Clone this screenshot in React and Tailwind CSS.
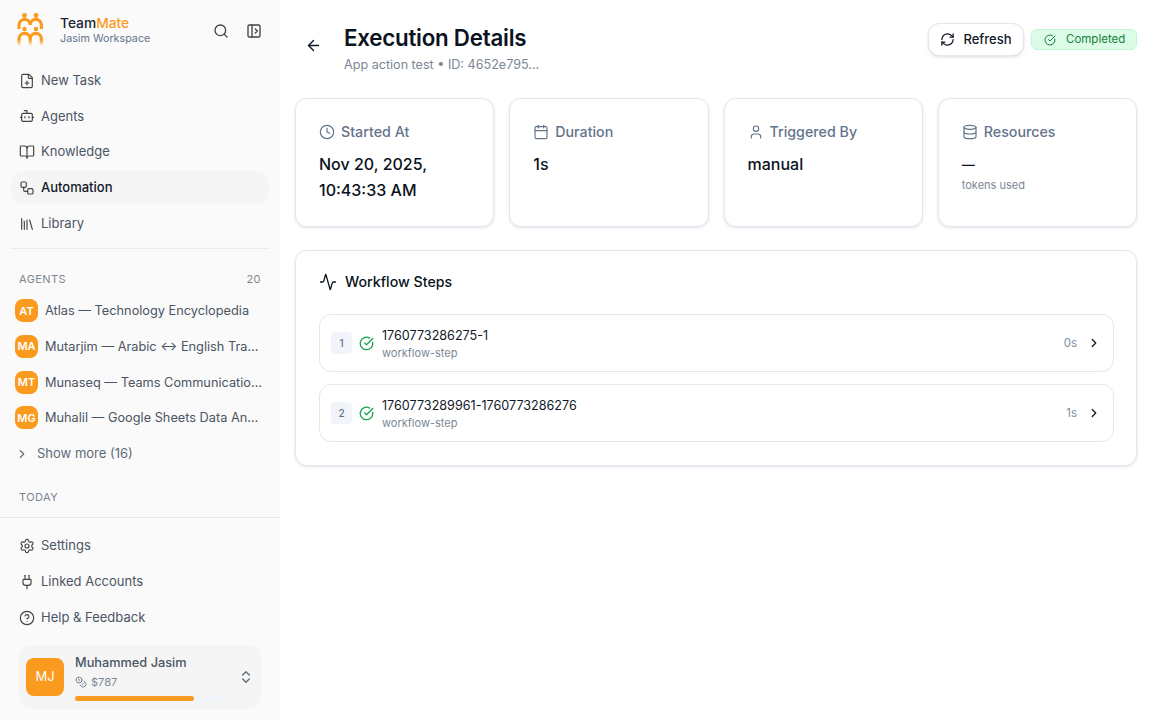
import {
  Activity,
  ArrowLeft,
  BookOpen,
  Bot,
  Calendar,
  ChevronRight,
  ChevronsUpDown,
  CircleCheckBig,
  CircleHelp,
  Clock,
  Coins,
  Database,
  FilePlus,
  Library,
  PanelLeftOpen,
  Plug,
  RefreshCw,
  Search,
  Settings,
  User,
  Workflow,
} from "lucide-react";

const navItems = [
  { label: "New Task", icon: FilePlus },
  { label: "Agents", icon: Bot },
  { label: "Knowledge", icon: BookOpen },
  { label: "Automation", icon: Workflow, active: true },
  { label: "Library", icon: Library },
];

const agents = [
  { initials: "AT", name: "Atlas — Technology Encyclopedia" },
  { initials: "MA", name: "Mutarjim — Arabic ↔ English Translator" },
  { initials: "MT", name: "Munaseq — Teams Communication Agent" },
  { initials: "MG", name: "Muhalil — Google Sheets Data Analyst" },
];

const footerItems = [
  { label: "Settings", icon: Settings },
  { label: "Linked Accounts", icon: Plug },
  { label: "Help & Feedback", icon: CircleHelp },
];

const steps = [
  { n: 1, id: "1760773286275-1", time: "0s" },
  { n: 2, id: "1760773289961-1760773286276", time: "1s" },
];

function Logo() {
  return (
    <svg width="27" height="34" viewBox="0 0 27 34" fill="none" className="-mt-[2px]">
      <defs>
        <linearGradient id="fade" x1="0" y1="0" x2="0" y2="1">
          <stop offset="0.5" stopColor="#fa9a1e" />
          <stop offset="1" stopColor="#fa9a1e" stopOpacity="0.05" />
        </linearGradient>
      </defs>
      <circle cx="7.5" cy="2.5" r="2.4" fill="#fa9a1e" />
      <circle cx="19" cy="2.5" r="2.4" fill="#fa9a1e" />
      <path d="M2 16V12a5.6 5.6 0 0 1 11.2 0a5.6 5.6 0 0 1 11.2 0v4" stroke="#fa9a1e" strokeWidth="3.2" />
      <circle cx="7.5" cy="16" r="2.2" fill="#fa9a1e" />
      <circle cx="19" cy="16" r="2.2" fill="#fa9a1e" />
      <path d="M2 33V26a5.6 5.6 0 0 1 11.2 0a5.6 5.6 0 0 1 11.2 0v7M13.2 26v7" stroke="url(#fade)" strokeWidth="3.2" />
    </svg>
  );
}

function Sidebar() {
  return (
    <aside className="w-[280px] h-screen shrink-0 flex flex-col bg-[#fafafa]">
      <div className="h-[518px] shrink-0 overflow-hidden border-b border-[#e8e8e8]">
        <div className="h-[62px] flex items-center pl-[17px] pr-[18px]">
          <Logo />
          <div className="ml-[16px] grow -mt-[1px]">
            <p className="text-[13.75px] leading-[17px] font-medium text-[#1c2433]">
              Team<span className="text-[#fa9a1e]">Mate</span>
            </p>
            <p className="text-[10.75px] leading-[14px] text-[#64748b]">Jasim Workspace</p>
          </div>
          <Search size={16} className="text-[#444] mr-[17px]" />
          <PanelLeftOpen size={16} className="text-[#444]" />
        </div>
        <nav className="px-[11px] mt-[2px] flex flex-col gap-[2.75px]">
          {navItems.map((item) => (
            <div
              key={item.label}
              className={`h-[33px] flex items-center gap-[6px] px-[8px] rounded-xl text-[13px] ${
                item.active ? "bg-[#f5f5f5] text-[#111827] font-medium" : "text-[#4b5563]"
              }`}
            >
              <item.icon size={16} strokeWidth={1.75} className="text-[#444] shrink-0" />
              <span>{item.label}</span>
            </div>
          ))}
        </nav>
        <div className="mx-[11px] mt-[8px] border-t border-[#ececec]" />
        <div className="flex justify-between items-center px-[19px] mt-[23px] text-[11px] leading-[14px] tracking-[0.04em] text-[#7b8794]">
          <span>AGENTS</span>
          <span>20</span>
        </div>
        <div className="px-[15px] mt-[7px] flex flex-col">
          {agents.map((agent) => (
            <div key={agent.initials} className="h-[35.7px] flex items-center gap-[7px]">
              <div className="size-[23px] shrink-0 rounded-lg bg-[#fa9a1e] text-white text-[11px] font-semibold flex items-center justify-center">
                {agent.initials}
              </div>
              <span className="truncate text-[12.75px] text-[#4b5563]">{agent.name}</span>
            </div>
          ))}
          <div className="h-[36px] flex items-center text-[13px] text-[#5f6b7a]">
            <ChevronRight size={14} className="mr-[8px]" />
            Show more (16)
          </div>
        </div>
        <p className="px-[19px] mt-[18px] text-[11px] leading-[14px] tracking-[0.04em] text-[#7b8794]">TODAY</p>
      </div>
      <div className="px-[11px] pt-[11px] flex flex-col gap-[3px]">
        {footerItems.map((item) => (
          <div key={item.label} className="h-[33px] flex items-center gap-[6px] px-[8px] text-[13px] text-[#4b5563]">
            <item.icon size={16} strokeWidth={1.75} className="text-[#444] shrink-0" />
            <span>{item.label}</span>
          </div>
        ))}
      </div>
      <div className="mx-[19px] mt-[11px] h-[64px] rounded-xl bg-[#f5f5f5] flex items-center pl-[7px] pr-[7px]">
        <div className="size-[38px] shrink-0 rounded-lg bg-[#fa9a1e] text-white text-[13px] flex items-center justify-center">
          MJ
        </div>
        <div className="ml-[11px] grow self-start pt-[10px]">
          <p className="text-[12.75px] leading-[16px] font-medium text-[#4b5563]">Muhammed Jasim</p>
          <p className="mt-[4px] flex items-center gap-[4px] text-[11px] leading-[14px] text-[#7b8794]">
            <Coins size={12} />
            $787
          </p>
          <div className="mt-[7px] w-[153px] h-[5px] rounded-full bg-[#f1f5f9]">
            <div className="h-full rounded-full bg-[#fa9a1e]" style={{ width: "78%" }} />
          </div>
        </div>
        <ChevronsUpDown size={16} className="text-[#5f6b7a] shrink-0" />
      </div>
    </aside>
  );
}

function StatCard({ icon: Icon, label, children }) {
  return (
    <div className="h-[129px] rounded-xl border border-[#e2e8f0] bg-white shadow-[0_1px_3px_rgba(100,116,139,0.2)] px-[23px] pt-[23px]">
      <div className="flex items-center gap-[6px] text-[14.25px] leading-[20px] font-medium text-[#64748b]">
        <Icon size={16} strokeWidth={1.75} />
        {label}
      </div>
      {children}
    </div>
  );
}

function StepRow({ n, id, time }) {
  return (
    <div className="h-[58px] rounded-xl border border-[#e2e8f0] flex items-center pl-[11px] pr-[12px]">
      <div className="w-[21px] h-[22px] rounded bg-[#f1f5f9] text-[10px] font-medium text-[#64748b] flex items-center justify-center">
        {n}
      </div>
      <CircleCheckBig size={15} className="text-[#16a34a] ml-[7px]" />
      <div className="ml-[8px] grow pt-[2px]">
        <p className="text-[12.6px] leading-[18px] text-[#111827]">{id}</p>
        <p className="text-[11px] leading-[16px] text-[#7b8794]">workflow-step</p>
      </div>
      <span className="mt-[1px] text-[11.5px] text-[#7b8fa3]">{time}</span>
      <ChevronRight size={14} strokeWidth={2.25} className="ml-[10px] text-[#111827]" />
    </div>
  );
}

export default function App() {
  return (
    <div className="flex h-screen overflow-hidden bg-white font-['Inter','Liberation_Sans',sans-serif]">
      <Sidebar />
      <main className="grow px-[15px]">
        <header className="h-[98px] flex items-start">
          <ArrowLeft size={17} className="text-[#111827] mt-[37px] ml-[10px]" />
          <div className="ml-[22px] mt-[24px] grow">
            <h1 className="text-[22.3px] leading-[28px] font-semibold tracking-[-0.01em] text-[#0b1220]">Execution Details</h1>
            <p className="mt-[4px] text-[12.6px] leading-[18px] text-[#7b8794]">App action test • ID: 4652e795...</p>
          </div>
          <button className="mt-[23px] w-[96px] h-[33px] rounded-xl border border-[#e2e8f0] bg-white shadow-[0_1px_3px_rgba(100,116,139,0.25)] flex items-center justify-center gap-[8px] text-[13px] font-medium text-[#111827]">
            <RefreshCw size={15} />
            Refresh
          </button>
          <div className="mt-[29px] ml-[7px] w-[106px] h-[21px] rounded-md border border-[#bbf7d0] bg-[#dcfce7] flex items-center gap-[10px] pl-[12px] text-[11.5px] text-[#15803d]">
            <CircleCheckBig size={12} />
            Completed
          </div>
        </header>

        <div className="grid grid-cols-4 gap-[15px]">
          <StatCard icon={Clock} label="Started At">
            <p className="mt-[9px] text-[16px] leading-[26px] font-medium text-[#0b1220]">Nov 20, 2025,<br />10:43:33 AM</p>
          </StatCard>
          <StatCard icon={Calendar} label="Duration">
            <p className="mt-[9px] text-[16px] leading-[26px] font-medium text-[#0b1220]">1s</p>
          </StatCard>
          <StatCard icon={User} label="Triggered By">
            <p className="mt-[9px] text-[16px] leading-[26px] font-medium text-[#0b1220]">manual</p>
          </StatCard>
          <StatCard icon={Database} label="Resources">
            <p className="mt-[9px] text-[13px] leading-[26px] font-medium text-[#0b1220]">—</p>
            <p className="text-[11px] leading-[16px] text-[#7b8794]">tokens used</p>
          </StatCard>
        </div>

        <section className="mt-[23px] h-[216px] rounded-xl border border-[#e2e8f0] bg-white shadow-[0_1px_3px_rgba(100,116,139,0.2)] pl-[23px] pr-[22px] pt-[21px]">
          <div className="flex items-center gap-[8px] text-[14.2px] leading-[20px] font-medium text-[#0b1220]">
            <Activity size={18} strokeWidth={1.75} />
            Workflow Steps
          </div>
          <div className="mt-[22px] flex flex-col gap-[12px]">
            {steps.map((step) => (
              <StepRow key={step.n} {...step} />
            ))}
          </div>
        </section>
      </main>
    </div>
  );
}
